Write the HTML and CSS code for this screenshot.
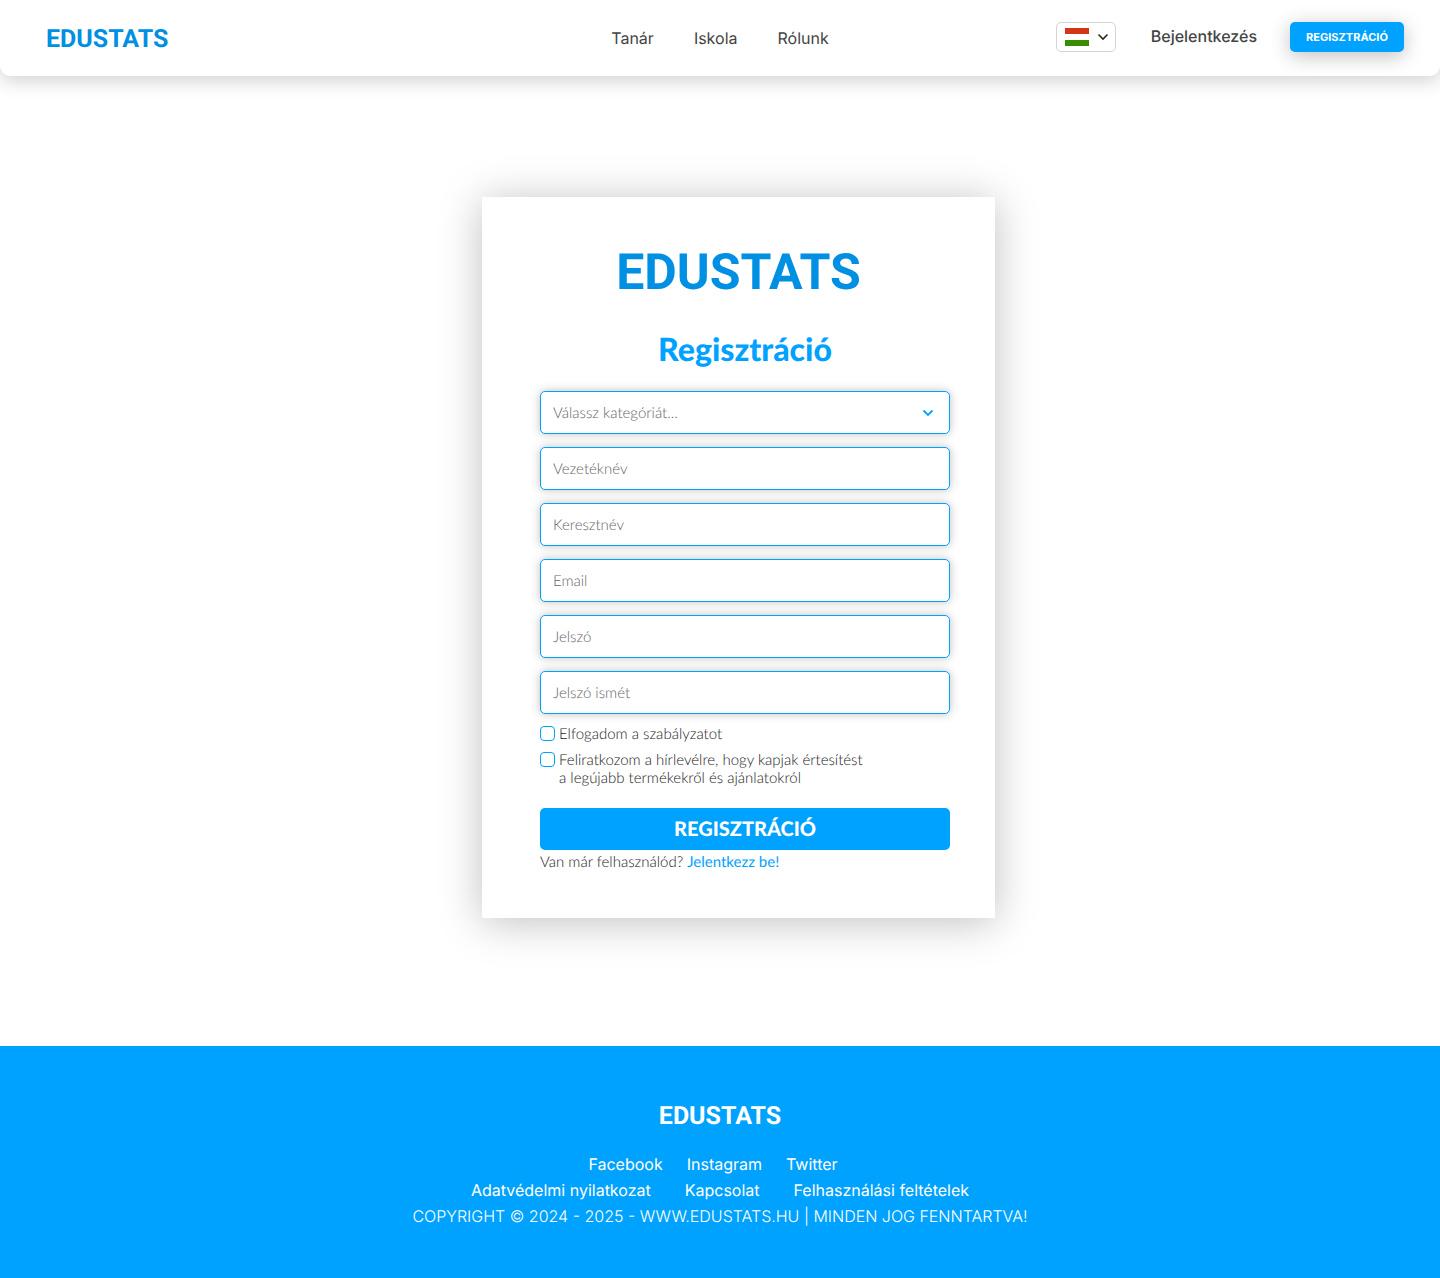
FILE: index.html
```html
<!DOCTYPE html>
<html lang="hu">
<head>
<meta charset="utf-8">
<meta name="viewport" content="width=device-width, initial-scale=1">
<title>EDUSTATS – Regisztráció</title>
<link rel="stylesheet" href="styles.css">
</head>
<body>
<header class="topbar">
  <a class="logo" href="#">EDUSTATS</a>
  <nav class="nav">
    <a href="#">Tanár</a>
    <a href="#">Iskola</a>
    <a href="#">Rólunk</a>
  </nav>
  <div class="account">
    <button class="language" type="button" aria-label="Magyar" aria-haspopup="listbox">
      <svg class="flag" viewBox="0 0 24 18" aria-hidden="true"><path fill="#d43516" d="M0 0h24v6H0z"/><path fill="#fff" d="M0 6h24v6H0z"/><path fill="#388e00" d="M0 12h24v6H0z"/></svg>
      <svg class="language-arrow" viewBox="0 0 12 8" aria-hidden="true"><path d="M1.500 1.500 6 6l4.500-4.500" fill="none" stroke="#292929" stroke-width="1.600"/></svg>
    </button>
    <a class="login" href="#">Bejelentkezés</a>
    <button class="register" type="button">REGISZTRÁCIÓ</button>
  </div>
</header>

<main class="main">
  <section class="card">
    <p class="brand">EDUSTATS</p>
    <form class="form">
      <h1 class="title">Regisztráció</h1>
      <div class="fields">
        <div class="select">
          <select class="field" aria-label="Kategória">
            <option>Válassz kategóriát...</option>
            <option>Tanár</option>
            <option>Iskola</option>
          </select>
          <svg class="select-arrow" viewBox="0 0 12 8" aria-hidden="true"><path d="M1.500 1.500 6 6l4.500-4.500" fill="none" stroke="#00a2ff" stroke-width="1.800"/></svg>
        </div>
        <input class="field" type="text" placeholder="Vezetéknév" aria-label="Vezetéknév">
        <input class="field" type="text" placeholder="Keresztnév" aria-label="Keresztnév">
        <input class="field" type="email" placeholder="Email" aria-label="Email">
        <input class="field" type="password" placeholder="Jelszó" aria-label="Jelszó">
        <input class="field" type="password" placeholder="Jelszó ismét" aria-label="Jelszó ismét">
      </div>
      <div class="checks">
        <label class="check"><input type="checkbox"><span>Elfogadom a szabályzatot</span></label>
        <label class="check"><input type="checkbox"><span>Feliratkozom a hírlevélre, hogy kapjak értesítést<br>a legújabb termékekről és ajánlatokról</span></label>
      </div>
      <button class="submit" type="submit">REGISZTRÁCIÓ</button>
      <p class="hint">Van már felhasználód? <a href="#">Jelentkezz be!</a></p>
    </form>
  </section>
</main>

<footer class="footer">
  <p class="footer-logo">EDUSTATS</p>
  <nav class="social">
    <a href="#">Facebook</a>
    <a href="#">Instagram</a>
    <a href="#">Twitter</a>
  </nav>
  <nav class="legal">
    <a href="#">Adatvédelmi nyilatkozat</a>
    <a href="#">Kapcsolat</a>
    <a href="#">Felhasználási feltételek</a>
  </nav>
  <p class="copyright">COPYRIGHT © 2024 - 2025 - WWW.EDUSTATS.HU | MINDEN JOG FENNTARTVA!</p>
</footer>
</body>
</html>
```
FILE: styles.css
```css
* { box-sizing: border-box; }

body {
  margin: 0;
  min-height: 100vh;
  display: flex;
  flex-direction: column;
  background: #fff;
  color: #222;
  font-family: Inter, sans-serif;
  font-size: 16px;
  text-rendering: geometricPrecision;
}

p, h1 { margin: 0; }
a { color: inherit; text-decoration: none; }
button, input, select { font: inherit; text-rendering: inherit; }
button { cursor: pointer; }

.topbar {
  display: grid;
  grid-template-columns: 1fr auto 1fr;
  align-items: center;
  padding: 22px 36px 24px;
  background: #fff;
  border-radius: 0 0 10px 10px;
  box-shadow: 0 4px 20px rgba(0, 0, 0, 0.2);
}

.logo, .brand, .footer-logo {
  font-family: Roboto, sans-serif;
  font-weight: 700;
}

.logo {
  padding: 6px 0 0 10px;
  color: #0090e3;
  font-size: 25px;
  line-height: 24px;
}

.nav {
  display: flex;
  gap: 40px;
  padding-top: 2px;
  color: #444;
  line-height: 28px;
}

.account {
  display: flex;
  justify-content: flex-end;
  align-items: center;
}

.language {
  display: flex;
  align-items: center;
  gap: 8px;
  width: 60px;
  height: 30px;
  padding: 0 8px;
  background: #fff;
  border: 1px solid #d4d4d4;
  border-radius: 5px;
}

.flag { width: 24px; height: 18px; flex: none; }
.language-arrow { width: 12px; height: 8px; flex: none; }

.login {
  margin: 0 33px 2px 35px;
  color: #444;
  font-weight: 500;
  line-height: 28px;
}

.register {
  width: 114px;
  height: 30px;
  padding: 0;
  background: #00a2ff;
  border: 0;
  border-radius: 5px;
  box-shadow: 0 4px 20px rgba(0, 0, 0, 0.25);
  color: #fff;
  font-size: 11px;
  font-weight: 700;
}

.main {
  flex: 1;
  display: flex;
  justify-content: center;
  padding: 121px 0 128px 37px;
}

.card {
  width: 513px;
  padding: 46px 45px 47px 58px;
  background: #fff;
  box-shadow: 0 4px 40px rgba(0, 0, 0, 0.25);
  font-family: Lato, sans-serif;
}

.brand {
  color: #0090e3;
  font-size: 50px;
  line-height: 60px;
  text-align: center;
  margin-right: 13px;
}

.title {
  margin: 25px 0 22px;
  color: #00a2ff;
  font-size: 32px;
  font-weight: 900;
  line-height: 41px;
  text-align: center;
}

.fields { display: grid; gap: 13px; }

.field {
  width: 100%;
  height: 43px;
  padding: 0 12px;
  appearance: none;
  background: #fff;
  border: 1px solid #00a2ff;
  border-radius: 5px;
  box-shadow: 0 0 10px rgba(0, 0, 0, 0.25);
  color: #666;
  font-size: 15px;
  font-weight: 300;
}

.field::placeholder { color: #666; opacity: 1; }

.select { display: grid; align-items: center; }
.select > * { grid-area: 1 / 1; }
.select-arrow {
  justify-self: end;
  width: 12px;
  height: 8px;
  margin-right: 16px;
  pointer-events: none;
}

.checks {
  display: grid;
  gap: 8px;
  margin-top: 11px;
  font-size: 15px;
  font-weight: 300;
  line-height: 18px;
}

.check { display: flex; align-items: flex-start; gap: 4px; }

.check input {
  flex: none;
  width: 15px;
  height: 15px;
  margin: 1px 0 0;
  appearance: none;
  background: #fff;
  border: 1px solid #00a2ff;
  border-radius: 4px;
}

.check input:checked { background: #00a2ff; }

.submit {
  width: 100%;
  height: 42px;
  margin-top: 21px;
  padding: 0;
  background: #00a2ff;
  border: 0;
  border-radius: 5px;
  color: #fff;
  font-size: 20px;
  font-weight: 900;
}

.hint {
  margin-top: 3px;
  font-size: 15px;
  font-weight: 300;
  line-height: 18px;
}

.hint a { color: #00a2ff; font-weight: 400; }

.footer {
  display: flex;
  flex-direction: column;
  align-items: center;
  padding: 56px 24px 49px;
  background: #00a2ff;
  color: #fff;
  line-height: 26px;
}

.footer-logo { font-size: 25px; line-height: 30px; }
.social { display: flex; gap: 24px; margin: 19px 14px 0 0; }
.legal { display: flex; gap: 34px; }
.copyright { font-weight: 300; text-align: center; }
```
